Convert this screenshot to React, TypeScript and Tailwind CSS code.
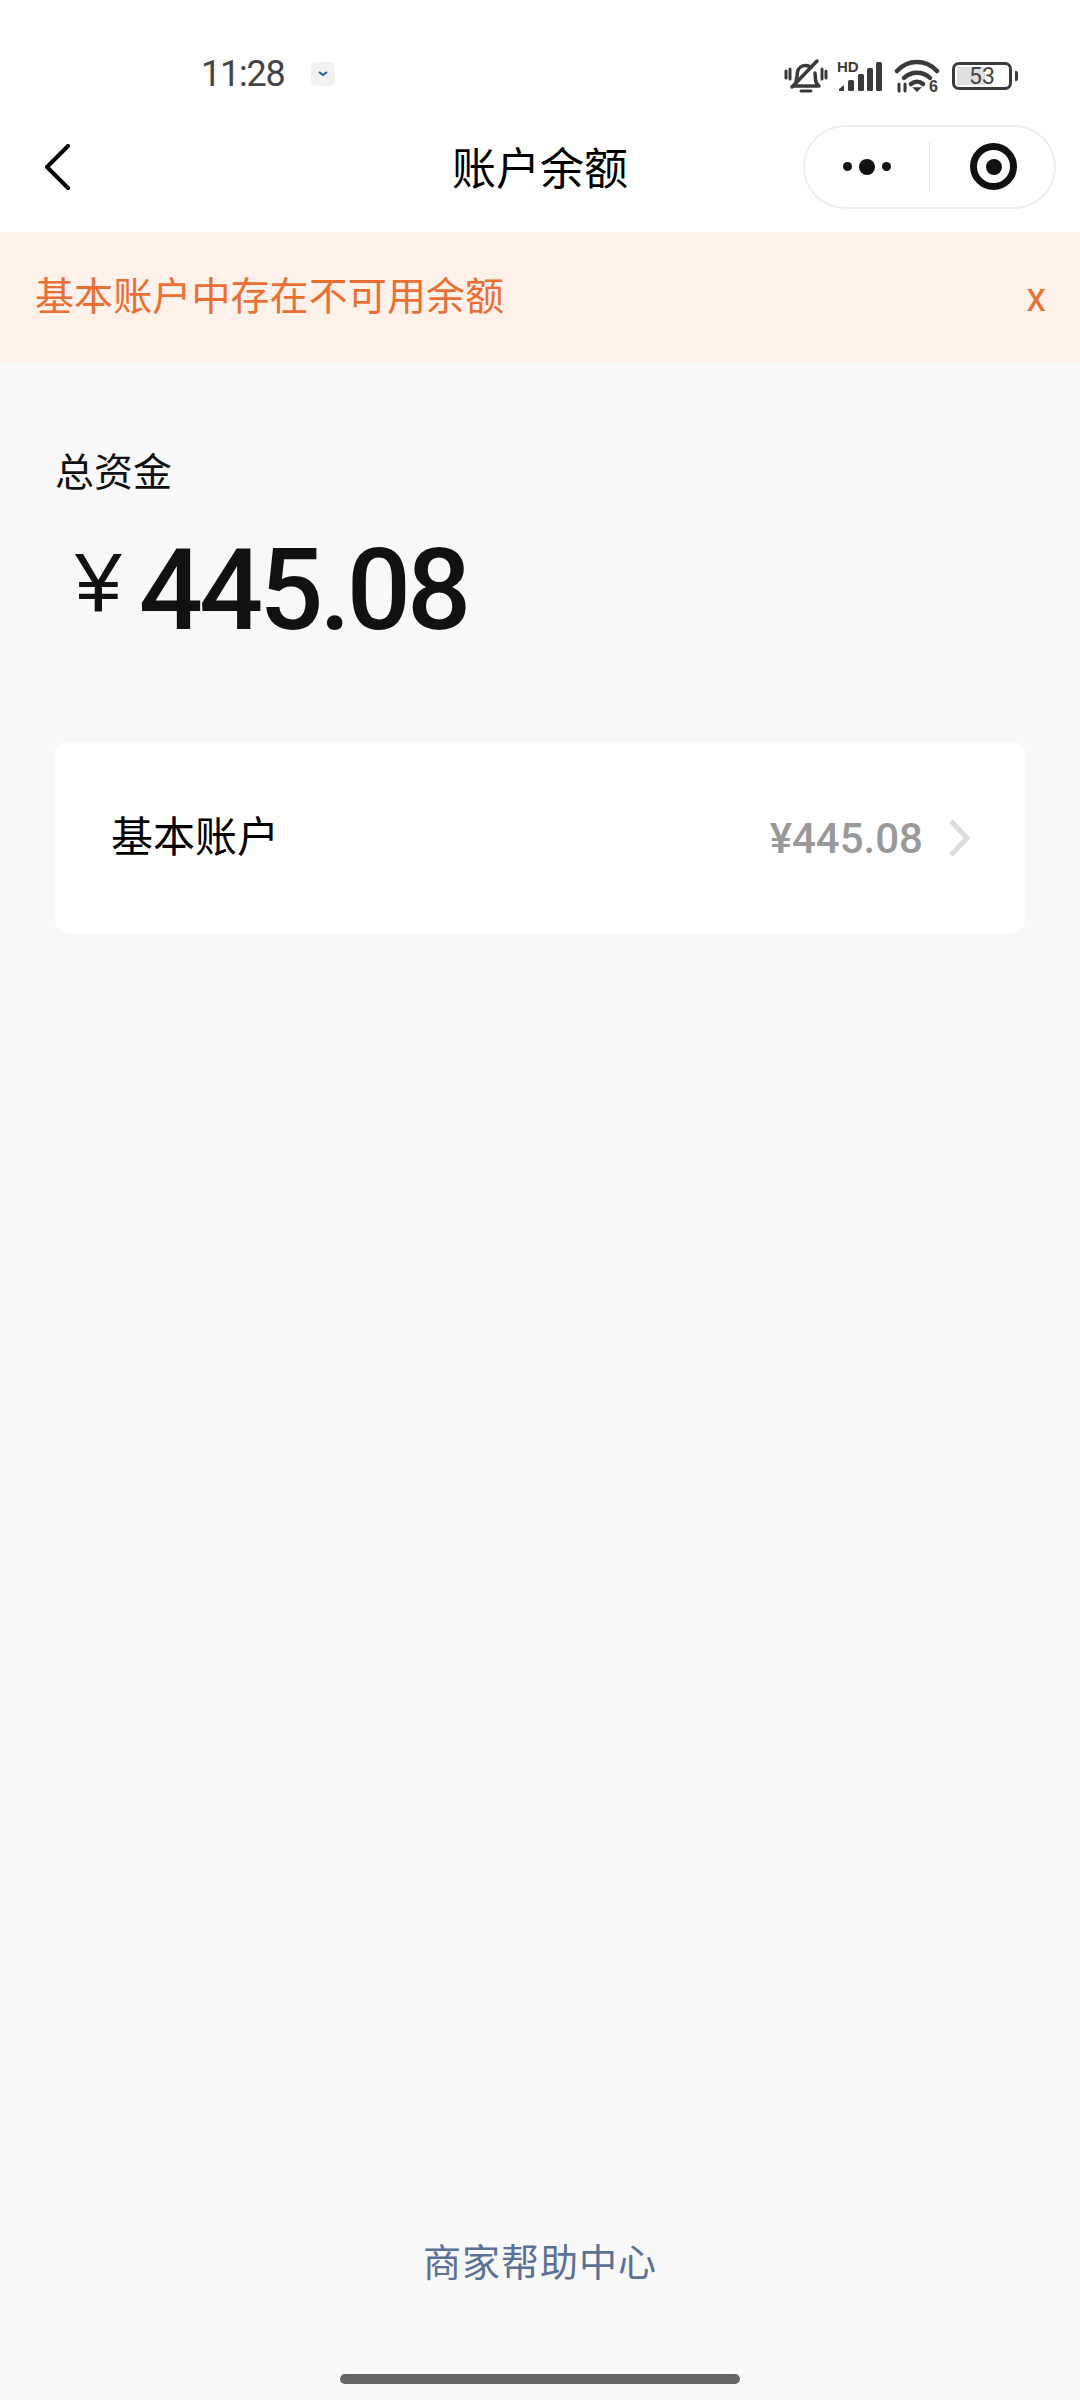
const cjk = "font-['Noto_Sans_CJK_SC','Noto_Sans',sans-serif]";

const StatusIcons = () => (
  <div className="flex items-center">
    {/* muted bell */}
    <svg width="44" height="36" viewBox="0 0 44 36" fill="none" stroke="#3a3a3a" strokeWidth="3.500" strokeLinecap="round" strokeLinejoin="round">
      <path d="M9 28h26c-2.500-2-3.500-4-3.500-7l-.5-6M12 23c1-2 1-5 1.500-9 .7-4 4-6.500 8-6.500 2 0 4 .6 5.500 2" />
      <path d="M8 29 33 3" />
      <path d="M17 33h10" strokeWidth="3" />
      <path d="M2 13v7M6 11v10M38 11v10M42 13v7" strokeWidth="3" />
    </svg>
    {/* HD signal */}
    <div className="relative ml-[9px] h-[32px] w-[46px]">
      <span className="absolute left-0 top-[1px] font-['Liberation_Sans',sans-serif] text-[15px] font-bold leading-[12px] text-[#3a3a3a]">HD</span>
      <svg width="46" height="32" viewBox="0 0 46 32" fill="#3a3a3a">
        <path d="M2 31v-2l5-4v6z" />
        <rect x="11" y="20" width="6" height="11" rx="1.500" />
        <rect x="21" y="14" width="6" height="17" rx="1.500" />
        <rect x="30" y="8" width="6" height="23" rx="1.500" />
        <rect x="39" y="2" width="6" height="29" rx="1.500" />
      </svg>
    </div>
    {/* wifi */}
    <div className="relative ml-[11px] h-[34px] w-[46px]">
      <svg width="46" height="34" viewBox="0 0 46 34" fill="none" stroke="#3a3a3a" strokeWidth="4.500" strokeLinecap="round">
        <path d="M3 12C14 0 32 0 43 12" />
        <path d="M10 19c7-7 19-7 26 0" />
        <path d="M17 25c3.500-3 8.500-3 12 0" />
        <path d="M20 29h6l-3 3z" fill="#3a3a3a" strokeWidth="1.500" />
        <path d="M5 25v7M11 25v7" strokeWidth="3" />
      </svg>
      <span className="absolute right-[2px] top-[21px] font-['Liberation_Sans',sans-serif] text-[16px] font-bold leading-[13px] text-[#3a3a3a]">6</span>
    </div>
    {/* battery */}
    <div className="ml-[12px] flex items-center">
      <div className="relative flex h-[28px] w-[60px] items-center justify-center rounded-[7px] border-[3px] border-[#3a3a3a]">
        <div className="absolute inset-y-[2px] left-[2px] w-[28px] rounded-[2px] bg-[#e0e0e0]" />
        <span className="relative font-['Roboto',sans-serif] text-[23px] leading-none text-[#444444]">53</span>
      </div>
      <div className="ml-[3px] h-[10px] w-[3px] rounded-r-[2px] bg-[#3a3a3a]" />
    </div>
  </div>
);

export default function App() {
  return (
    <div className={`flex h-[2400px] w-[1080px] flex-col bg-[#f8f8f8] ${cjk}`}>
      <div className="h-[232px] bg-white">
        {/* status bar */}
        <div className="flex h-[125px] items-start justify-between pl-[201px] pr-[62px] pt-[58px]">
          <div className="flex items-center">
            <span className="font-['Roboto',sans-serif] text-[36px] leading-[32px] tracking-[-1.200px] text-[#444444]">11:28</span>
            <div className="ml-[26px] flex h-[24px] w-[24px] items-center justify-center rounded-[5px] bg-[#f3f2f3]">
              <svg width="12" height="8" viewBox="0 0 12 8" fill="none" stroke="#1f5fa8" strokeWidth="2">
                <path d="M2 2l4 3 4-3" />
              </svg>
            </div>
          </div>
          <StatusIcons />
        </div>
        {/* nav bar */}
        <div className="relative flex h-[83px] items-center justify-between pl-[43px] pr-[24px]">
          <svg width="28" height="46" viewBox="0 0 28 46" fill="none" stroke="#000" strokeWidth="4" strokeLinecap="round" strokeLinejoin="round">
            <path d="M25 2 4 23l21 21" />
          </svg>
          <div className="absolute inset-x-0 top-[14px] text-center text-[44px] leading-[54px] text-black">账户余额</div>
          <div className="flex h-[84px] w-[253px] items-center rounded-full border-2 border-[#eeeeee]">
            <div className="flex w-[124px] items-center justify-center gap-[7px]">
              <span className="h-[9px] w-[9px] rounded-full bg-[#111]" />
              <span className="h-[16px] w-[16px] rounded-full bg-[#111]" />
              <span className="h-[9px] w-[9px] rounded-full bg-[#111]" />
            </div>
            <div className="h-[50px] w-px bg-[#e4e4e4]" />
            <div className="flex flex-1 items-center justify-center pl-[3px]">
              <div className="flex h-[47px] w-[47px] items-center justify-center rounded-full border-[7px] border-[#111]">
                <span className="h-[16px] w-[16px] rounded-full bg-[#111]" />
              </div>
            </div>
          </div>
        </div>
      </div>

      {/* warning banner */}
      <div className="flex h-[130px] items-center justify-between bg-[#fef1e9] pl-[35px] pr-[34px] text-[#ea6f35]">
        <span className="mb-[8px] text-[39px] leading-none tracking-[0.1px]">基本账户中存在不可用余额</span>
        <span className="mt-[2px] font-['Roboto',sans-serif] text-[40px] leading-none">x</span>
      </div>

      {/* total */}
      <div className="pl-[55px] pt-[80px]">
        <div className="text-[39px] leading-[54px] text-[#111]">总资金</div>
        <div className="mt-[43px] flex items-start pl-[20px]">
          <span className="mt-[1px] font-['Liberation_Sans',sans-serif] text-[84px] leading-[84px] text-[#111]">¥</span>
          <span className="ml-[17px] font-['Roboto',sans-serif] text-[113px] font-medium leading-[104px] tracking-[-4px] text-[#111]">445.08</span>
        </div>
      </div>

      {/* account row */}
      <div className="mx-[55px] mt-[99px] flex h-[191px] items-center rounded-[14px] bg-white pl-[56px] pr-[54px]">
        <span className="mb-[7px] text-[42px] leading-none text-black">基本账户</span>
        <span className="ml-auto mt-[2px] font-['Roboto',sans-serif] text-[42px] font-medium leading-none text-[#999999]">¥445.08</span>
        <svg className="ml-[25px]" width="23" height="38" viewBox="0 0 23 38" fill="none" stroke="#dcdcdc" strokeWidth="5">
          <path d="M3 2l16 17L3 36" />
        </svg>
      </div>

      <div className="mt-auto flex flex-col items-center pb-[16px]">
        <span className="text-[38px] leading-[54px] tracking-[1px] text-[#5c7096]">商家帮助中心</span>
        <div className="mt-[87px] h-[10px] w-[400px] rounded-full bg-[#666666]" />
      </div>
    </div>
  );
}
